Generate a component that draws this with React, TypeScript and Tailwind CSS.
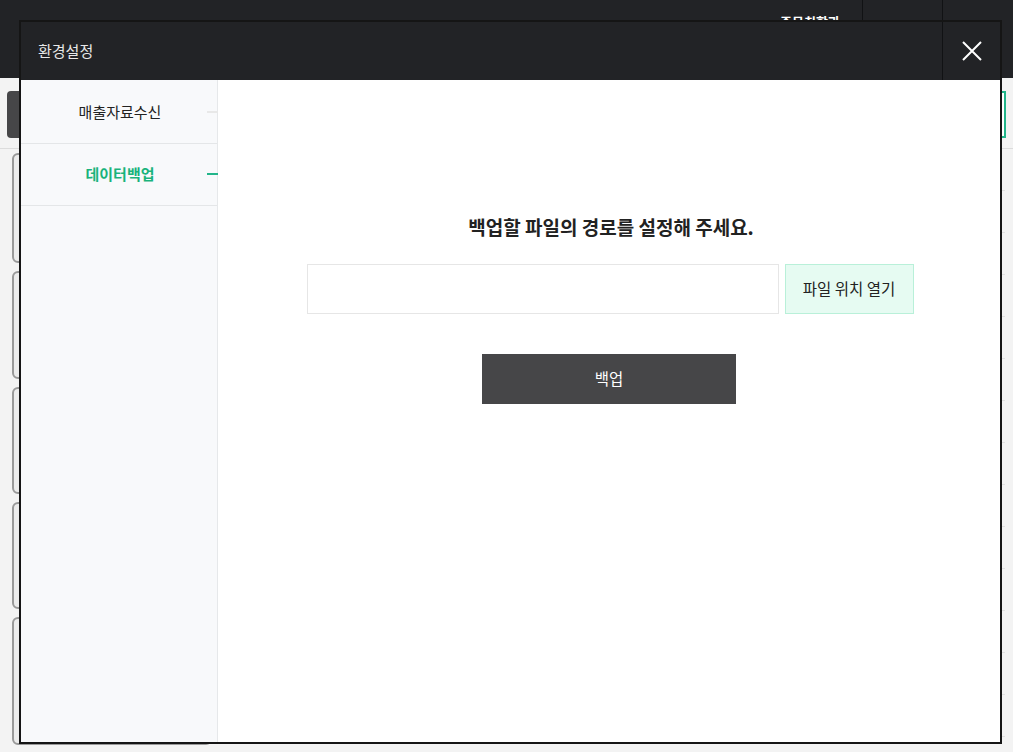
import React from "react";

const font = { fontFamily: '"Noto Sans CJK KR", "Noto Sans", sans-serif' };

const menus = [
  { label: "매출자료수신", active: false },
  { label: "데이터백업", active: true },
];

const BackgroundPage = () => (
  <div className="flex h-full flex-col bg-[#f3f3f3]">
    <div className="flex h-[78px] shrink-0 justify-end bg-[#222326]">
      <div className="flex w-[82px] items-start justify-start pt-[12px] text-[13px] font-bold text-white">
        주문취합관
      </div>
      <div className="w-[80px] border-l border-[#111214]" />
      <div className="w-[71px] border-l border-[#111214]" />
    </div>
    <div className="flex h-[70px] shrink-0 items-center justify-between px-[7px] pt-[2px]">
      <div className="h-[47px] w-[200px] rounded-sm bg-[#464648]" />
      <div className="h-[47px] w-[300px] border-2 border-[#22b58a] bg-white" />
    </div>
    <div className="flex flex-1 gap-[6px] border-t border-[#dcdcdc] pl-[12px] pr-[8px] pb-[8px]">
      <div className="flex w-[200px] flex-col gap-[8px] pt-[4px]">
        {[110, 108, 107, 107, 128].map((h, i) => (
          <div key={i} className="rounded-[6px] border-2 border-[#999999] bg-[#ececec]" style={{ height: h }} />
        ))}
      </div>
      <div className="flex flex-1 flex-col">
        {Array.from({ length: 14 }).map((_, i) => (
          <div key={i} className="h-[42px] border-b border-[#e0e0e0]" />
        ))}
      </div>
    </div>
  </div>
);

export default function App() {
  return (
    <div className="relative h-[752px] w-[1013px] overflow-hidden" style={font}>
      <BackgroundPage />
      <div className="absolute left-[19px] top-[20px] flex h-[724px] w-[983px] flex-col border-2 border-[#151515] bg-white">
        <div className="flex h-[58px] shrink-0 items-center bg-[#222326]">
          <div className="flex-1 pl-[17px] text-[15px] text-[#e8e8e8]">환경설정</div>
          <button className="flex h-full w-[58px] items-center justify-center border-l border-[#111214]">
            <svg width="22" height="22" viewBox="0 0 22 22" fill="none">
              <path d="M2 2L20 20M20 2L2 20" stroke="#ffffff" strokeWidth="2" />
            </svg>
          </button>
        </div>
        <div className="flex flex-1">
          <div className="flex w-[197px] shrink-0 flex-col border-r border-[#e6e8ea] bg-[#f8f9fb] pt-[2px]">
            {menus.map((m) => (
              <div
                key={m.label}
                className="relative flex h-[62px] items-center justify-center border-b border-[#e4e6e8] pl-[2px] text-[15px]"
              >
                <span className={m.active ? "font-bold text-[#1ab37c]" : "text-[#222222]"}>{m.label}</span>
                <span
                  className={
                    "absolute right-[-1px] top-[29px] h-[2px] w-[11px] " +
                    (m.active ? "bg-[#22b58a]" : "bg-[#e8e8e8]")
                  }
                />
              </div>
            ))}
          </div>
          <div className="flex flex-1 flex-col items-center pt-[133px]">
            <h2 className="pl-[4px] text-[19px] font-bold leading-[28px] text-[#222222]">
              백업할 파일의 경로를 설정해 주세요.
            </h2>
            <div className="mt-[23px] flex gap-[6px] pl-[2px]">
              <input className="h-[50px] w-[472px] border border-[#e6e6e6] bg-white px-3 text-[14px] outline-none" />
              <button className="h-[50px] w-[129px] border border-[#b9f0d9] bg-[#e6fbf2] text-[15.5px] text-[#222222]">
                파일 위치 열기
              </button>
            </div>
            <button className="mt-[40px] h-[50px] w-[254px] bg-[#464648] text-[15.5px] text-white">
              백업
            </button>
          </div>
        </div>
      </div>
    </div>
  );
}
